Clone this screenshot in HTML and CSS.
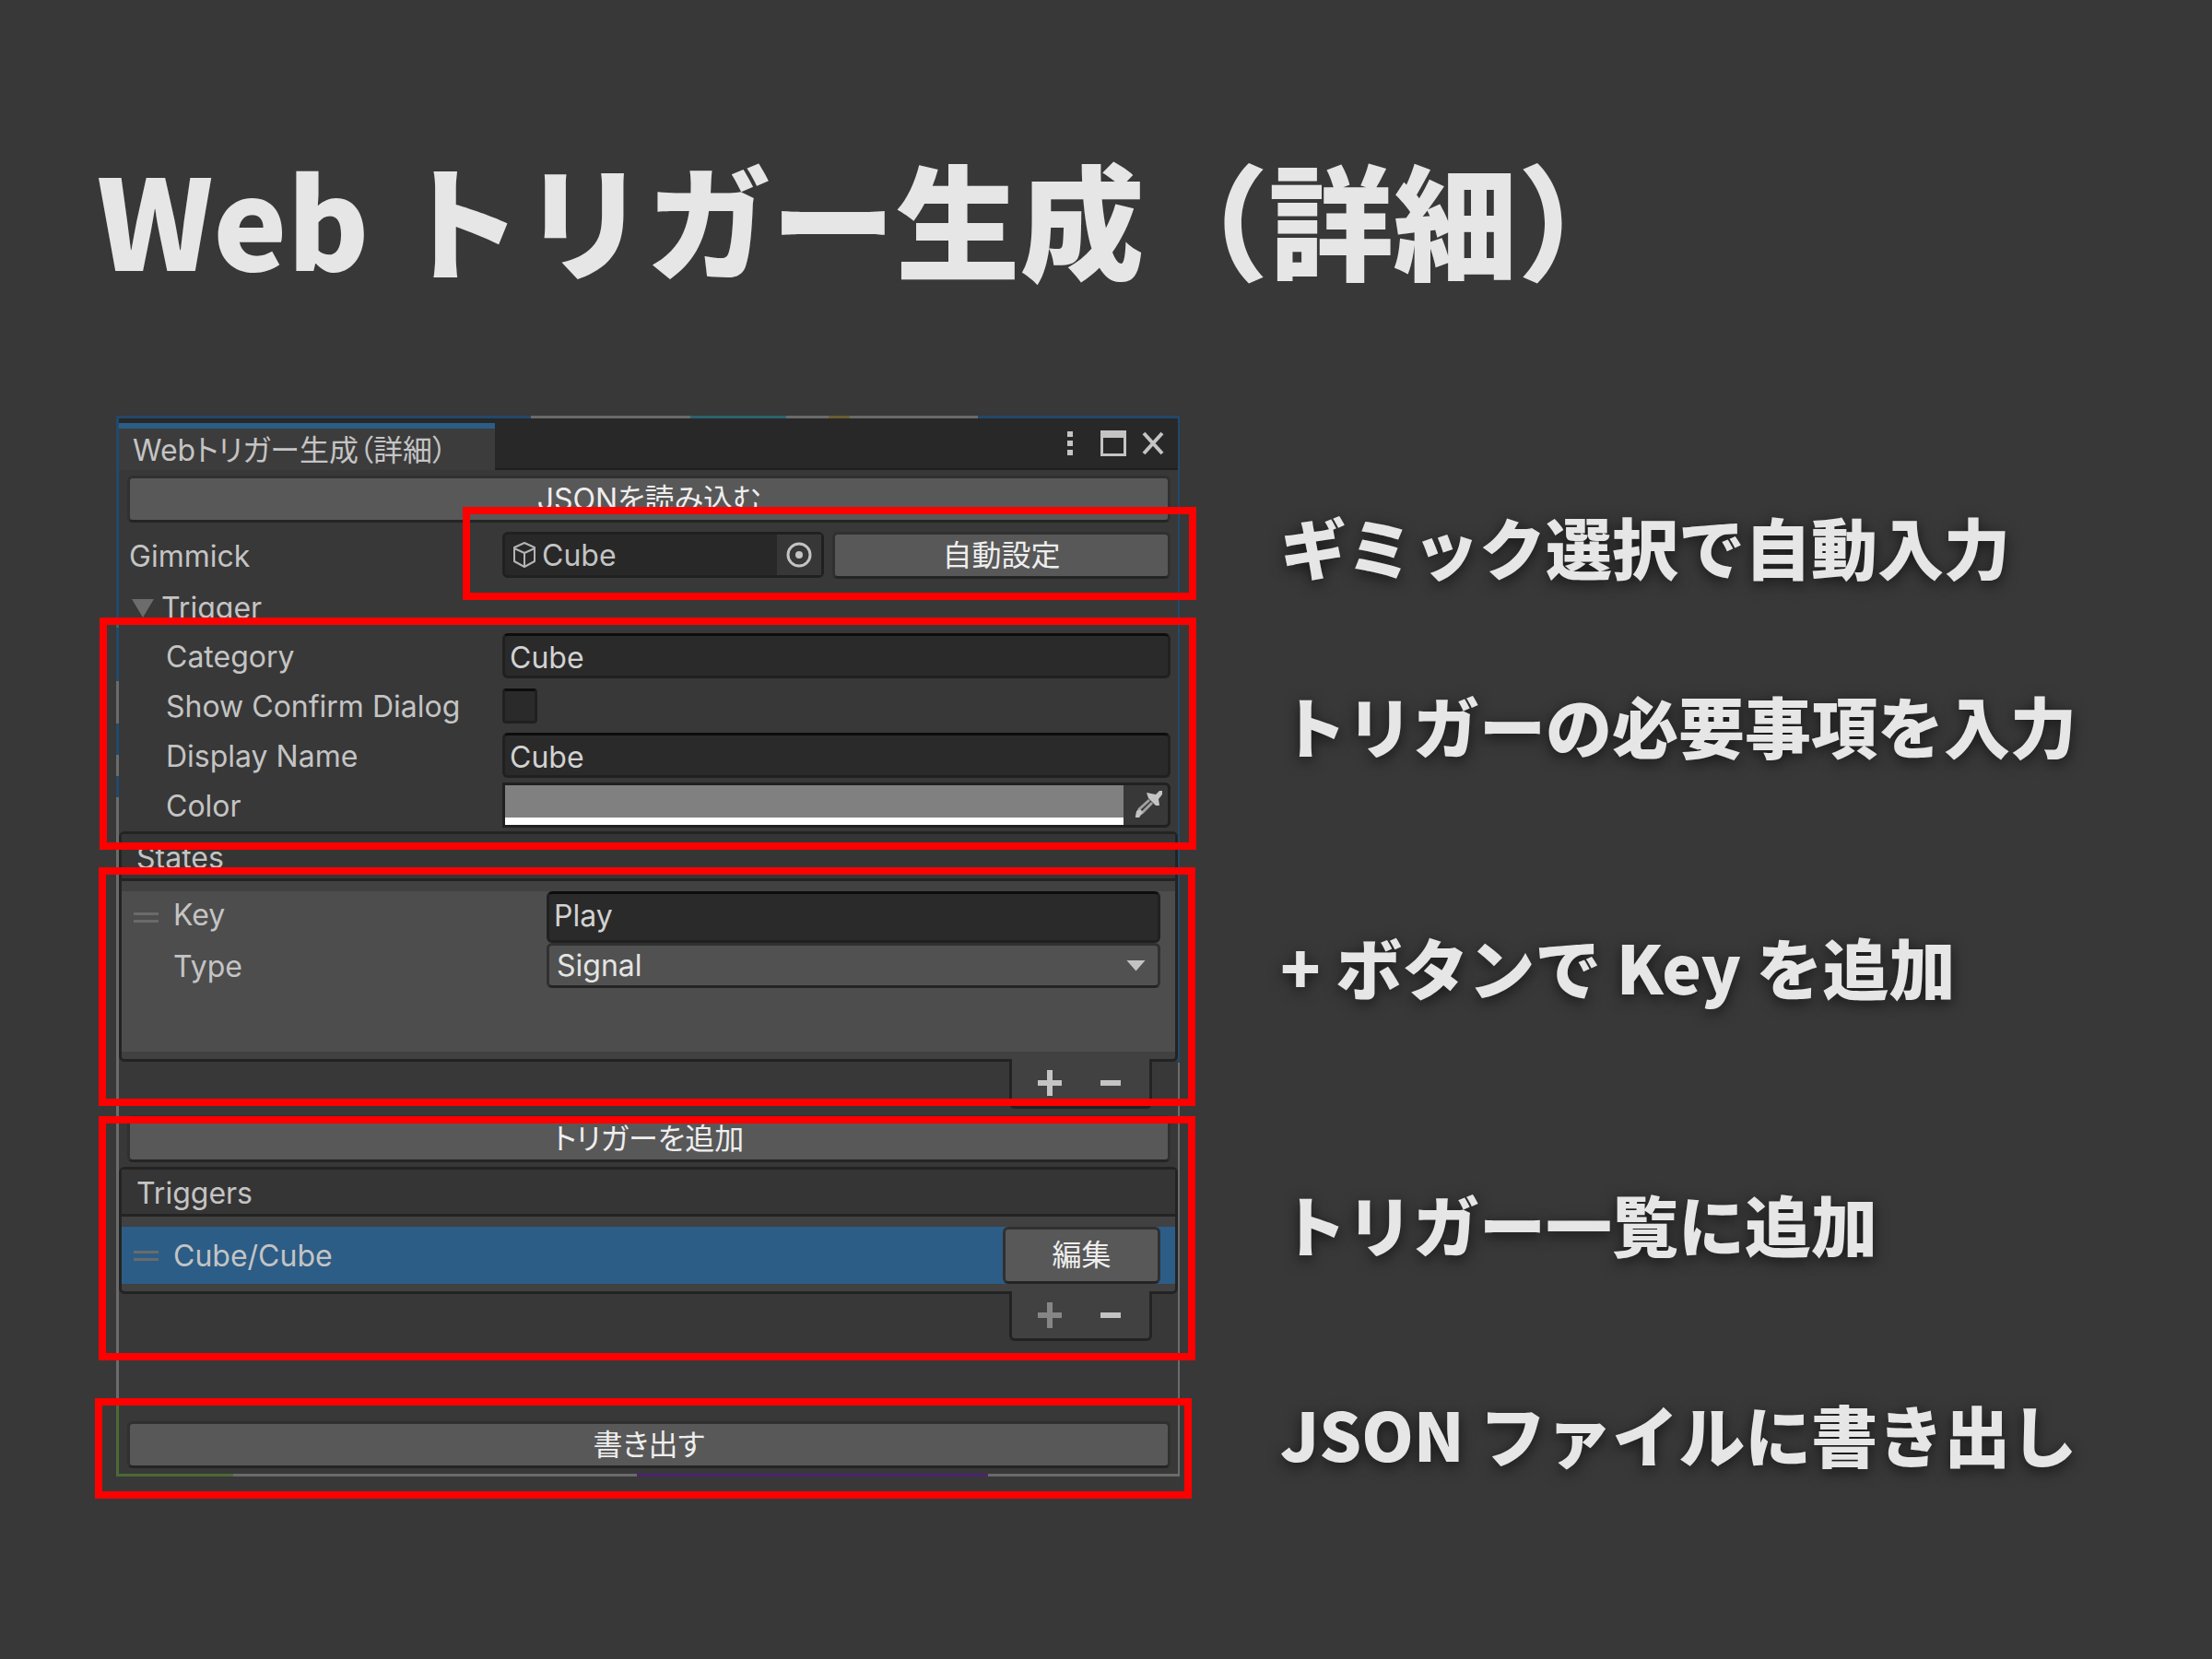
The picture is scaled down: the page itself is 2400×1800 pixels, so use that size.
FILE: index.html
```html
<!DOCTYPE html>
<html lang="ja">
<head>
<meta charset="utf-8">
<title>Web トリガー生成（詳細）</title>
<link rel="stylesheet" href="styles.css">
</head>
<body>
<main class="slide">
  <h1 class="title">Web トリガー生成（詳細）</h1>
  <div class="columns">
    <section class="window" aria-label="Webトリガー生成（詳細）">
      <header class="titlebar">
        <div class="tab">Webトリガー生成（詳細）</div>
        <div class="window-tools">
          <button class="tool" type="button" aria-label="メニュー">
            <svg width="8" height="28" viewBox="0 0 8 28"><path d="M1 1h6v6H1zM1 11h6v6H1zM1 21h6v6H1z" fill="#c4c4c4"/></svg>
          </button>
          <button class="tool" type="button" aria-label="最大化">
            <svg width="28" height="28" viewBox="0 0 28 28"><path d="M0 0h28v28H0zM3 8v17h22V8z" fill="#c4c4c4" fill-rule="evenodd"/></svg>
          </button>
          <button class="tool" type="button" aria-label="閉じる">
            <svg width="24" height="28" viewBox="0 0 24 28"><path d="M2 3l20 22M22 3L2 25" stroke="#c4c4c4" stroke-width="4" fill="none"/></svg>
          </button>
        </div>
      </header>

      <div class="inspector">
        <button class="button wide" type="button">JSONを読み込む</button>

        <div class="row gimmick">
          <label class="label" for="gimmick">Gimmick</label>
          <div class="gimmick-fields">
            <div class="object-field">
              <svg class="cube" width="28" height="30" viewBox="0 0 28 30"><path d="M14 2L25 7v15l-11 6L3 22V7zM3 8l11 5 11-5M14 13v15" fill="none" stroke="#b4b4b4" stroke-width="2" stroke-linejoin="round"/></svg>
              <input class="object-input" id="gimmick" type="text" value="Cube">
              <button class="picker" type="button" aria-label="オブジェクトを選択">
                <svg width="28" height="28" viewBox="0 0 28 28"><circle cx="14" cy="14" r="12" fill="none" stroke="#c4c4c4" stroke-width="3"/><circle cx="14" cy="14" r="4" fill="#c4c4c4"/></svg>
              </button>
            </div>
            <button class="button" type="button">自動設定</button>
          </div>
        </div>

        <button class="foldout" type="button" aria-expanded="true"><span class="triangle"></span>Trigger</button>

        <div class="fields">
          <div class="row nested">
            <label class="label" for="category">Category</label>
            <input class="text" id="category" type="text" value="Cube">
          </div>
          <div class="row nested">
            <label class="label" for="confirm">Show Confirm Dialog</label>
            <input class="check" id="confirm" type="checkbox">
          </div>
          <div class="row nested">
            <label class="label" for="display">Display Name</label>
            <input class="text" id="display" type="text" value="Cube">
          </div>
          <div class="row nested">
            <label class="label" for="color">Color</label>
            <div class="color-field">
              <input class="color" id="color" type="color" value="#808080">
              <button class="dropper" type="button" aria-label="スポイト">
                <svg width="32" height="32" viewBox="0 0 32 32"><path d="M14 4l5 1 5 1 4-4 3 0v4l-4 5 1 7-4 0-3-3-5-5z" fill="#c4c4c4"/><path d="M17 12L6 22l-2 6 5-2 11-11" fill="none" stroke="#a0a0a0" stroke-width="3"/><path d="M2 31l1-7 4-2 3 3-4 6z" fill="#c4c4c4"/></svg>
              </button>
            </div>
          </div>
        </div>
      </div>

      <section class="list">
        <h2 class="list-head">States</h2>
        <div class="list-body">
          <div class="state">
            <span class="handle"></span>
            <label class="label key-label" for="key">Key</label>
            <input class="text" id="key" type="text" value="Play">
            <label class="label type-label" for="type">Type</label>
            <div class="select-field">
              <select class="select" id="type"><option>Signal</option></select>
              <span class="caret"></span>
            </div>
          </div>
        </div>
      </section>
      <div class="list-foot">
        <button class="mark" type="button" aria-label="追加"><svg width="26" height="28" viewBox="0 0 26 28"><path d="M10 0h6v11h10v6H16v11h-6V17H0v-6h10z" fill="currentColor"/></svg></button>
        <button class="mark" type="button" aria-label="削除"><svg width="22" height="28" viewBox="0 0 22 28"><path d="M0 11h22v6H0z" fill="currentColor"/></svg></button>
      </div>

      <div class="add">
        <button class="button wide" type="button">トリガーを追加</button>
      </div>

      <section class="list">
        <h2 class="list-head">Triggers</h2>
        <div class="list-body">
          <div class="trigger">
            <span class="handle"></span>
            <span class="trigger-name">Cube/Cube</span>
            <button class="button edit" type="button">編集</button>
          </div>
        </div>
      </section>
      <div class="list-foot">
        <button class="mark" type="button" aria-label="追加" disabled><svg width="26" height="28" viewBox="0 0 26 28"><path d="M10 0h6v11h10v6H16v11h-6V17H0v-6h10z" fill="currentColor"/></svg></button>
        <button class="mark" type="button" aria-label="削除"><svg width="22" height="28" viewBox="0 0 22 28"><path d="M0 11h22v6H0z" fill="currentColor"/></svg></button>
      </div>

      <div class="export">
        <button class="button wide" type="button">書き出す</button>
      </div>

      <div class="frame frame-gimmick"></div>
      <div class="frame frame-trigger"></div>
      <div class="frame frame-states"></div>
      <div class="frame frame-list"></div>
      <div class="frame frame-export"></div>
    </section>

    <div class="notes">
      <p class="note">ギミック選択で自動入力</p>
      <p class="note">トリガーの必要事項を入力</p>
      <p class="note">+ ボタンで Key を追加</p>
      <p class="note">トリガー一覧に追加</p>
      <p class="note">JSON ファイルに書き出し</p>
    </div>
  </div>
</main>
</body>
</html>
```
FILE: styles.css
```css
* {
  box-sizing: border-box;
}

body {
  margin: 0;
  background: #383838;
  color: #e6e6e6;
  font-family: "Noto Sans CJK JP", sans-serif;
}

button,
input,
select {
  margin: 0;
  padding: 0;
  border: 0;
  background: none;
  color: inherit;
  font: inherit;
  min-width: 0;
}

svg {
  display: block;
}

.slide {
  padding: 155px 60px 120px 105px;
}

.title {
  margin: 0 0 136px;
  font-size: 135px;
  font-weight: 900;
  line-height: 160px;
}

.columns {
  display: grid;
  grid-template-columns: 1154fr 951fr;
  gap: 109px;
  align-items: start;
  padding-left: 21px;
}

/* Editor window */

.window {
  position: relative;
  padding: 3px 2px 3px 3px;
  color: #c4c4c4;
  font-family: Inter, "Noto Sans CJK JP", sans-serif;
  font-size: 32px;
  line-height: 40px;
  font-feature-settings: "palt";
  background:
    linear-gradient(to right, #24476b 39%, #6b6b6b 39% 54%, #2b6270 54% 63%, #6b6b6b 63% 67%, #6b5d33 67% 69%, #6b6b6b 69% 81%, #24476b 81%) top / 100% 3px no-repeat,
    linear-gradient(to right, #4a6a35 11%, #6b6b6b 11% 49%, #4b2470 49% 82%, #6b6b6b 82%) bottom / 100% 3px no-repeat,
    linear-gradient(#214a6c 19%, #2f6b5a 19% 20%, #214a6c 20% 25%, #6b6b6b 25% 29%, #214a6c 29% 32%, #6b6b6b 32% 34%, #214a6c 34% 36%, #6b6b6b 36% 93%, #4a6a35 93%) left / 3px 100% no-repeat,
    linear-gradient(#214a6c 61%, #6b6b6b 61%) right / 2px 100% no-repeat,
    #383838;
}

.titlebar {
  display: flex;
  justify-content: space-between;
  height: 56px;
  padding-top: 5px;
  background: #282828;
  box-shadow: inset 0 -2px #202020;
}

.tab {
  width: 408px;
  padding: 4px 15px 0;
  border-top: 6px solid #2c5d87;
  background: #3c3c3c;
  white-space: nowrap;
}

.window-tools {
  display: flex;
  align-items: flex-start;
  gap: 17px;
  padding: 8px 15px 0 0;
}

.tool:first-child {
  margin-right: 12px;
}

.inspector {
  padding: 6px 8px 4px 9px;
}

.button {
  height: 51px;
  border: 3px solid #303030;
  border-bottom-color: #242424;
  border-radius: 6px;
  background: #585858;
  color: #eeeeee;
  text-align: center;
  white-space: nowrap;
}

.wide {
  display: block;
  width: 100%;
}

.row {
  display: grid;
  grid-template-columns: 407px minmax(0, 1fr);
  align-items: center;
  height: 49px;
}

.label {
  padding-top: 2px;
}

.gimmick {
  height: 51px;
  margin-top: 10px;
  padding-left: 2px;
  grid-template-columns: 405px minmax(0, 1fr);
}

.gimmick-fields {
  display: grid;
  grid-template-columns: minmax(0, 349fr) minmax(0, 367fr);
  gap: 9px;
  align-items: start;
}

.object-field {
  display: flex;
  align-items: center;
  height: 50px;
  padding-left: 7px;
  border: 3px solid #202020;
  border-radius: 6px;
  background: #282828;
}

.cube {
  flex: none;
}

.object-input {
  flex: 1;
  padding: 2px 0 0 5px;
}

.picker {
  display: grid;
  flex: none;
  place-items: center;
  width: 48px;
  height: 44px;
  background: #373737;
}

.foldout {
  display: flex;
  align-items: center;
  gap: 8px;
  height: 59px;
  padding: 5px 0 0 5px;
}

.triangle {
  width: 24px;
  height: 20px;
  background: #6c6c6c;
  clip-path: polygon(0 0, 100% 0, 50% 100%);
}

.fields {
  display: grid;
  gap: 5px;
}

.nested {
  grid-template-columns: 365px minmax(0, 1fr);
  padding-left: 42px;
}

.text {
  width: 100%;
  height: 49px;
  padding: 3px 5px 0;
  border: 3px solid #202020;
  border-top-color: #0d0d0d;
  border-radius: 6px;
  background: #2a2a2a;
  color: #d2d2d2;
}

.check {
  appearance: none;
  width: 38px;
  height: 38px;
  border: 3px solid #202020;
  border-top-color: #0d0d0d;
  border-radius: 4px;
  background: #2a2a2a;
}

.color-field {
  display: flex;
  height: 49px;
  border: 3px solid #202020;
  border-radius: 0 6px 6px 0;
}

.color {
  flex: 1;
  height: 43px;
}

.color::-webkit-color-swatch-wrapper {
  padding: 0;
}

.color::-webkit-color-swatch {
  border: 0;
  border-bottom: 8px solid #ffffff;
  border-radius: 0;
}

.dropper {
  display: grid;
  place-items: center;
  width: 48px;
  padding: 0 0 3px 6px;
}

/* Reorderable lists */

.list {
  border: 3px solid #232323;
  border-radius: 6px;
  background: #414141;
}

.list-head {
  margin: 0;
  height: 51px;
  padding: 6px 16px 0;
  border-bottom: 3px solid #232323;
  background: #353535;
  font-size: 32px;
  font-weight: 400;
  line-height: 40px;
}

.list-body {
  padding: 11px 0 8px;
}

.state {
  display: grid;
  grid-template-columns: 43px 405px minmax(0, 1fr);
  grid-template-rows: 56px 49px;
  align-items: center;
  padding: 0 16px 69px 13px;
  background: #4d4d4d;
}

.state .text {
  height: 56px;
  padding: 0 5px 4px;
}

.key-label {
  padding: 0 0 5px;
}

.type-label {
  grid-column: 2;
}

.handle {
  width: 27px;
  height: 11px;
  border: solid #6a6a6a;
  border-width: 3px 0;
}

.select-field {
  display: grid;
  align-items: center;
}

.select {
  grid-area: 1 / 1;
  appearance: none;
  width: 100%;
  height: 49px;
  padding: 0 8px;
  border: 3px solid #303030;
  border-bottom-color: #242424;
  border-radius: 6px;
  background: #515151;
  color: #e4e4e4;
}

.caret {
  grid-area: 1 / 1;
  justify-self: end;
  width: 21px;
  height: 12px;
  margin-right: 16px;
  background: #c4c4c4;
  clip-path: polygon(0 0, 100% 0, 50% 100%);
  pointer-events: none;
}

.trigger {
  display: flex;
  align-items: center;
  height: 62px;
  padding: 0 16px 0 13px;
  background: #2c5d87;
}

.trigger-name {
  flex: 1;
  padding: 2px 0 0 16px;
}

.edit {
  width: 171px;
  height: 62px;
}

.list-foot {
  display: flex;
  justify-content: center;
  align-items: center;
  gap: 42px;
  width: 155px;
  height: 54px;
  margin: -3px 28px 0 auto;
  padding-right: 4px;
  border: 3px solid #232323;
  border-top: 0;
  border-radius: 0 0 6px 6px;
  background: #414141;
}

.mark:disabled {
  color: #868686;
}

.add {
  padding: 7px 8px 5px 9px;
}

.export {
  padding: 87px 8px 6px 9px;
}

/* Callout frames over the window */

.frame {
  position: absolute;
  left: -19px;
  right: -17px;
  border: 8px solid #ff0000;
  pointer-events: none;
}

.frame-gimmick {
  top: 99px;
  left: 376px;
  right: -18px;
  height: 101px;
}

.frame-trigger {
  top: 219px;
  left: -18px;
  right: -18px;
  height: 252px;
}

.frame-states {
  top: 490px;
  height: 259px;
}

.frame-list {
  top: 760px;
  height: 265px;
}

.frame-export {
  top: 1066px;
  left: -23px;
  right: -13px;
  height: 109px;
}

/* Notes beside the window */

.notes {
  display: grid;
  grid-template-rows: 194px 194px 330px 228px 228px;
  align-items: center;
  padding-top: 44px;
}

.note {
  margin: 0;
  font-size: 72px;
  font-weight: 900;
  line-height: 88px;
  white-space: nowrap;
  text-shadow: 0 4px 16px rgba(0, 0, 0, 0.6);
}
```
